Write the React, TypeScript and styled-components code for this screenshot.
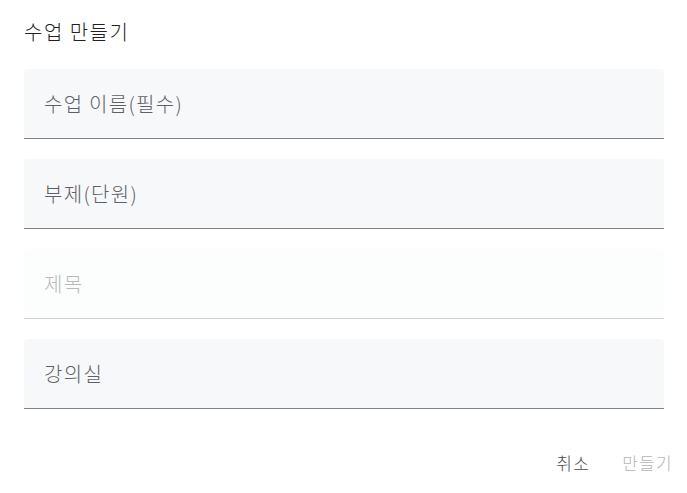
import styled, { createGlobalStyle } from "styled-components";

const GlobalStyle = createGlobalStyle`
    html, body {
        margin: 0;
        padding: 0;
        background: #ffffff;
        font-family: "Noto Sans CJK KR", "Noto Sans", sans-serif;
    }
`;

const fields = [
    { label: "수업 이름(필수)", disabled: false },
    { label: "부제(단원)", disabled: false },
    { label: "제목", disabled: true },
    { label: "강의실", disabled: false },
];

export default function App() {
    return (
        <>
            <GlobalStyle />
            <Dialog>
                <Title>수업 만들기</Title>
                <Fields>
                    {fields.map((f) => (
                        <Field key={f.label} $disabled={f.disabled}>
                            <Label $disabled={f.disabled}>{f.label}</Label>
                        </Field>
                    ))}
                </Fields>
                <Actions>
                    <ActionButton>취소</ActionButton>
                    <ActionButton $disabled>만들기</ActionButton>
                </Actions>
            </Dialog>
        </>
    );
}

const Dialog = styled.div`
    width: 687px;
    height: 493px;
    box-sizing: border-box;
    padding: 17px 0 0 24px;
    display: flex;
    flex-direction: column;
`;

const Title = styled.h2`
    margin: 0;
    font-size: 20px;
    font-weight: 300;
    letter-spacing: 1.5px;
    line-height: 30px;
    color: #202124;
`;

const Fields = styled.div`
    margin-top: 22px;
    width: 640px;
    display: flex;
    flex-direction: column;
    gap: 20px;
`;

const Field = styled.div<{ $disabled?: boolean }>`
    height: 69px;
    box-sizing: content-box;
    display: flex;
    align-items: center;
    padding: 0 20px;
    border-radius: 4px 4px 0 0;
    background: ${(p) => (p.$disabled ? "#fcfdfd" : "#f7f8fa")};
    border-bottom: 1px solid ${(p) => (p.$disabled ? "#cfcfcf" : "#80848a")};
`;

const Label = styled.span<{ $disabled?: boolean }>`
    font-size: 20px;
    font-weight: 300;
    letter-spacing: 1.3px;
    line-height: 28px;
    color: ${(p) => (p.$disabled ? "#b9b9b9" : "#5f6065")};
`;

const Actions = styled.div`
    margin-top: 38px;
    padding-right: 6px;
    display: flex;
    justify-content: flex-end;
    gap: 16px;
`;

const ActionButton = styled.button<{ $disabled?: boolean }>`
    border: none;
    background: transparent;
    padding: 4px 8px;
    font-family: "Noto Sans CJK KR", "Noto Sans", sans-serif;
    font-size: 17px;
    font-weight: 300;
    letter-spacing: 1.3px;
    line-height: 24px;
    color: ${(p) => (p.$disabled ? "#b5b5b5" : "#4a4a4a")};
    cursor: ${(p) => (p.$disabled ? "default" : "pointer")};
`;
